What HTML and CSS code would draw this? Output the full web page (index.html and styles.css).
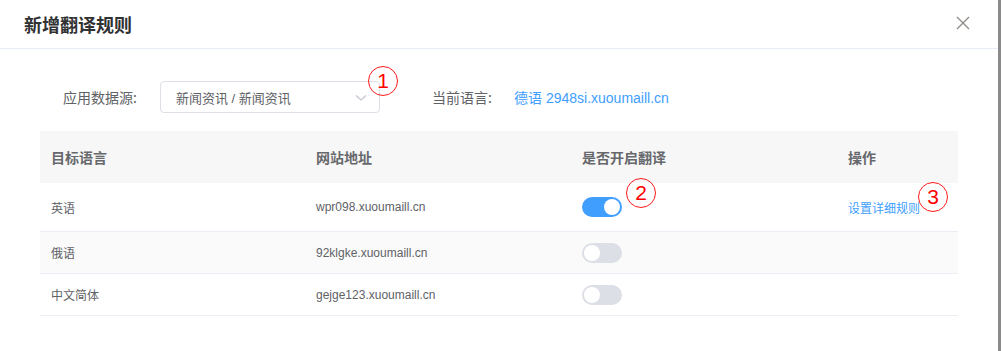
FILE: index.html
```html
<!DOCTYPE html>
<html lang="zh-CN">
<head>
<meta charset="utf-8">
<link rel="stylesheet" href="styles.css">
</head>
<body>
<div class="dialog">
  <div class="dialog-header">
    <span class="dialog-title">新增翻译规则</span>
    <span class="close">
      <svg width="14" height="14" viewBox="0 0 14 14"><path d="M1 1L13 13M13 1L1 13" stroke="#8f8a86" stroke-width="1.3" fill="none"/></svg>
    </span>
  </div>
  <div class="dialog-body">
    <div class="form-row">
      <span class="form-label">应用数据源:</span>
      <div class="select">
        <span class="select-text">新闻资讯 / 新闻资讯</span>
        <svg class="chevron" width="12" height="8" viewBox="0 0 12 8"><path d="M1 1.5L6 6L11 1.5" stroke="#c0c4cc" stroke-width="1.2" fill="none"/></svg>
        <span class="mark mark-1">1</span>
      </div>
      <span class="form-label current-label">当前语言:</span>
      <span class="current-value">德语 2948si.xuoumaill.cn</span>
    </div>
    <table class="rules">
      <colgroup>
        <col class="c1"><col class="c2"><col class="c3"><col class="c4">
      </colgroup>
      <thead>
        <tr><th>目标语言</th><th>网站地址</th><th>是否开启翻译</th><th>操作</th></tr>
      </thead>
      <tbody>
        <tr class="tall">
          <td>英语</td>
          <td class="latin">wpr098.xuoumaill.cn</td>
          <td><span class="switch on"><span class="knob"></span><span class="mark mark-2">2</span></span></td>
          <td><span class="link">设置详细规则<span class="mark mark-3">3</span></span></td>
        </tr>
        <tr class="hover">
          <td>俄语</td>
          <td class="latin">92klgke.xuoumaill.cn</td>
          <td><span class="switch"><span class="knob"></span></span></td>
          <td></td>
        </tr>
        <tr>
          <td>中文简体</td>
          <td class="latin">gejge123.xuoumaill.cn</td>
          <td><span class="switch"><span class="knob"></span></span></td>
          <td></td>
        </tr>
      </tbody>
    </table>
  </div>
</div>
</body>
</html>
```

FILE: styles.css
```css
html, body {
  margin: 0;
  padding: 0;
}
body {
  background: #8a8a8a;
  width: 1001px;
  height: 351px;
  overflow: hidden;
  font-family: "Liberation Sans", "Noto Sans CJK SC", sans-serif;
}
.dialog {
  width: 998px;
  height: 351px;
  background: #fff;
}
.dialog-header {
  height: 48px;
  border-bottom: 1px solid #e6edf9;
  display: flex;
  align-items: center;
  justify-content: space-between;
  padding: 0 28px 0 24px;
}
.dialog-title {
  font-family: "Noto Sans CJK SC", sans-serif;
  font-size: 18px;
  font-weight: 700;
  color: #303133;
  line-height: 24px;
  margin-top: -1px;
}
.close {
  display: flex;
  margin-top: -2px;
}
.dialog-body {
  padding: 32px 40px 0 40px;
}
.form-row {
  display: flex;
  align-items: center;
  height: 32px;
  padding-left: 23px;
}
.form-label {
  font-family: "Noto Sans CJK SC", sans-serif;
  font-size: 14px;
  color: #606266;
  width: 97px;
}
.select {
  position: relative;
  width: 220px;
  height: 32px;
  border: 1px solid #dcdfe6;
  border-radius: 4px;
  display: flex;
  align-items: center;
  padding-left: 15px;
  box-sizing: border-box;
}
.select-text {
  font-family: "Liberation Sans", "Noto Sans CJK SC", sans-serif;
  font-size: 13px;
  color: #606266;
  flex: 1;
}
.chevron {
  margin-right: 12px;
  margin-top: 2px;
}
.current-label {
  margin-left: 52px;
  width: 82px;
}
.current-value {
  font-size: 14px;
  color: #409eff;
}
.mark {
  position: absolute;
  width: 28px;
  height: 28px;
  border: 1px solid #ff1a1a;
  border-radius: 50%;
  color: #ff0000;
  font-family: "Liberation Sans", sans-serif;
  font-size: 21px;
  line-height: 28px;
  text-align: center;
  background: transparent;
}
.mark-1 {
  left: 207px;
  top: -16px;
}
.rules {
  margin-top: 18px;
  width: 918px;
  border-collapse: collapse;
  table-layout: fixed;
}
.c1 { width: 265px; }
.c2 { width: 266px; }
.c3 { width: 266px; }
.c4 { width: 121px; }
.rules th {
  background: #f7f7f7;
  height: 52px;
  padding: 0 11px;
  text-align: left;
  font-family: "Noto Sans CJK SC", sans-serif;
  font-size: 14px;
  font-weight: 700;
  color: #66686c;
}
.rules td {
  height: 41px;
  padding: 0 11px;
  border-bottom: 1px solid #ebeef5;
  font-family: "Noto Sans CJK SC", sans-serif;
  font-size: 12px;
  color: #606266;
}
.rules td.latin {
  font-family: "Liberation Sans", sans-serif;
}
.rules tr.tall td {
  height: 48px;
}
.rules tr.hover td {
  background: #fafafa;
}
.switch {
  position: relative;
  display: inline-block;
  vertical-align: middle;
  width: 40px;
  height: 20px;
  border-radius: 10px;
  background: #dcdfe6;
}
.switch.on {
  background: #409eff;
}
.knob {
  position: absolute;
  top: 2px;
  left: 2px;
  width: 16px;
  height: 16px;
  border-radius: 50%;
  background: #fff;
}
.switch.on .knob {
  left: 22px;
}
.mark-2 {
  left: 44px;
  top: -19px;
}
.link {
  position: relative;
  font-size: 12px;
  color: #409eff;
}
.mark-3 {
  left: 70px;
  top: -17px;
}
```
